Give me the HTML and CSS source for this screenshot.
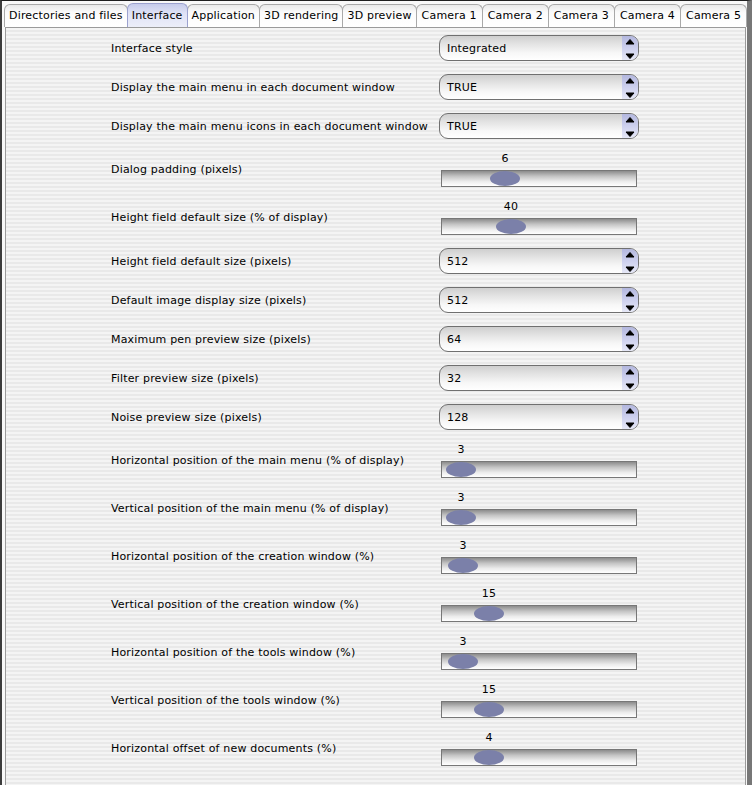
FILE: index.html
```html
<!DOCTYPE html>
<html>
<head>
<meta charset="utf-8">
<link rel="stylesheet" href="styles.css">
</head>
<body>
<div class="window">
  <div class="tabs">
    <div class="tab">Directories and files</div>
    <div class="tab active">Interface</div>
    <div class="tab">Application</div>
    <div class="tab">3D rendering</div>
    <div class="tab">3D preview</div>
    <div class="tab tab-wide">Camera 1</div>
    <div class="tab tab-wide">Camera 2</div>
    <div class="tab tab-wide">Camera 3</div>
    <div class="tab tab-wide">Camera 4</div>
    <div class="tab tab-wide">Camera 5</div>
  </div>
  <div class="panel">
    <div class="form">
      <div class="label">Interface style</div>
      <div class="menu"><span class="menu-text">Integrated</span><span class="arrows"><svg width="16" height="24" viewBox="0 0 16 24"><path d="M4 8 L8 3.5 L12 8 Z" fill="#000" stroke="#000" stroke-width="1" stroke-linejoin="round"/><path d="M4 18 L8 22.5 L12 18 Z" fill="#000" stroke="#000" stroke-width="1" stroke-linejoin="round"/></svg></span></div>

      <div class="label">Display the main menu in each document window</div>
      <div class="menu"><span class="menu-text">TRUE</span><span class="arrows"><svg width="16" height="24" viewBox="0 0 16 24"><path d="M4 8 L8 3.5 L12 8 Z" fill="#000" stroke="#000" stroke-width="1" stroke-linejoin="round"/><path d="M4 18 L8 22.5 L12 18 Z" fill="#000" stroke="#000" stroke-width="1" stroke-linejoin="round"/></svg></span></div>

      <div class="label">Display the main menu icons in each document window</div>
      <div class="menu"><span class="menu-text">TRUE</span><span class="arrows"><svg width="16" height="24" viewBox="0 0 16 24"><path d="M4 8 L8 3.5 L12 8 Z" fill="#000" stroke="#000" stroke-width="1" stroke-linejoin="round"/><path d="M4 18 L8 22.5 L12 18 Z" fill="#000" stroke="#000" stroke-width="1" stroke-linejoin="round"/></svg></span></div>

      <div class="label">Dialog padding (pixels)</div>
      <div class="slider" style="--pos:49px"><div class="value-row"><span class="value">6</span></div><div class="track"><span class="thumb"></span></div></div>

      <div class="label">Height field default size (% of display)</div>
      <div class="slider" style="--pos:55px"><div class="value-row"><span class="value">40</span></div><div class="track"><span class="thumb"></span></div></div>

      <div class="label">Height field default size (pixels)</div>
      <div class="menu"><span class="menu-text">512</span><span class="arrows"><svg width="16" height="24" viewBox="0 0 16 24"><path d="M4 8 L8 3.5 L12 8 Z" fill="#000" stroke="#000" stroke-width="1" stroke-linejoin="round"/><path d="M4 18 L8 22.5 L12 18 Z" fill="#000" stroke="#000" stroke-width="1" stroke-linejoin="round"/></svg></span></div>

      <div class="label">Default image display size (pixels)</div>
      <div class="menu"><span class="menu-text">512</span><span class="arrows"><svg width="16" height="24" viewBox="0 0 16 24"><path d="M4 8 L8 3.5 L12 8 Z" fill="#000" stroke="#000" stroke-width="1" stroke-linejoin="round"/><path d="M4 18 L8 22.5 L12 18 Z" fill="#000" stroke="#000" stroke-width="1" stroke-linejoin="round"/></svg></span></div>

      <div class="label">Maximum pen preview size (pixels)</div>
      <div class="menu"><span class="menu-text">64</span><span class="arrows"><svg width="16" height="24" viewBox="0 0 16 24"><path d="M4 8 L8 3.5 L12 8 Z" fill="#000" stroke="#000" stroke-width="1" stroke-linejoin="round"/><path d="M4 18 L8 22.5 L12 18 Z" fill="#000" stroke="#000" stroke-width="1" stroke-linejoin="round"/></svg></span></div>

      <div class="label">Filter preview size (pixels)</div>
      <div class="menu"><span class="menu-text">32</span><span class="arrows"><svg width="16" height="24" viewBox="0 0 16 24"><path d="M4 8 L8 3.5 L12 8 Z" fill="#000" stroke="#000" stroke-width="1" stroke-linejoin="round"/><path d="M4 18 L8 22.5 L12 18 Z" fill="#000" stroke="#000" stroke-width="1" stroke-linejoin="round"/></svg></span></div>

      <div class="label">Noise preview size (pixels)</div>
      <div class="menu"><span class="menu-text">128</span><span class="arrows"><svg width="16" height="24" viewBox="0 0 16 24"><path d="M4 8 L8 3.5 L12 8 Z" fill="#000" stroke="#000" stroke-width="1" stroke-linejoin="round"/><path d="M4 18 L8 22.5 L12 18 Z" fill="#000" stroke="#000" stroke-width="1" stroke-linejoin="round"/></svg></span></div>

      <div class="label">Horizontal position of the main menu (% of display)</div>
      <div class="slider" style="--pos:5px"><div class="value-row"><span class="value">3</span></div><div class="track"><span class="thumb"></span></div></div>

      <div class="label">Vertical position of the main menu (% of display)</div>
      <div class="slider" style="--pos:5px"><div class="value-row"><span class="value">3</span></div><div class="track"><span class="thumb"></span></div></div>

      <div class="label">Horizontal position of the creation window (%)</div>
      <div class="slider" style="--pos:7px"><div class="value-row"><span class="value">3</span></div><div class="track"><span class="thumb"></span></div></div>

      <div class="label">Vertical position of the creation window (%)</div>
      <div class="slider" style="--pos:33px"><div class="value-row"><span class="value">15</span></div><div class="track"><span class="thumb"></span></div></div>

      <div class="label">Horizontal position of the tools window (%)</div>
      <div class="slider" style="--pos:7px"><div class="value-row"><span class="value">3</span></div><div class="track"><span class="thumb"></span></div></div>

      <div class="label">Vertical position of the tools window (%)</div>
      <div class="slider" style="--pos:33px"><div class="value-row"><span class="value">15</span></div><div class="track"><span class="thumb"></span></div></div>

      <div class="label">Horizontal offset of new documents (%)</div>
      <div class="slider" style="--pos:33px"><div class="value-row"><span class="value">4</span></div><div class="track"><span class="thumb"></span></div></div>
    </div>
  </div>
</div>
</body>
</html>
```
FILE: styles.css
```css
html, body {
  margin: 0;
  padding: 0;
  height: 100%;
  overflow: hidden;
}

body {
  background: #f6f6f6;
  font-family: "DejaVu Sans", Verdana, sans-serif;
  font-size: 11px;
  letter-spacing: 0.18px;
  color: #000;
}

.window {
  box-sizing: border-box;
  width: 752px;
  height: 785px;
  border-top: 1px solid #1e1e1e;
  border-left: 2px solid #3c3c3c;
  border-right: 5px solid #777;
  padding: 0 1px 0 2px;
  display: flex;
  flex-direction: column;
  background: #f8f8f8;
}

.tabs {
  display: flex;
  align-items: flex-end;
  height: 26px;
}

.tab {
  box-sizing: border-box;
  height: 23px;
  line-height: 22px;
  padding: 0 4px;
  border: 1px solid #a9a9a9;
  border-bottom: none;
  border-radius: 6px 6px 0 0;
  background: linear-gradient(#e9e9e9, #fbfbfb 35%, #ffffff);
  white-space: nowrap;
  margin-right: -1px;
}

.tab-wide {
  padding: 0 5px;
}

.tab.active {
  height: 24px;
  line-height: 23px;
  border-color: #9ca2cf;
  background: linear-gradient(#c6cbeb, #dfe2f6 40%, #eceef9);
  position: relative;
  z-index: 1;
}

.panel {
  flex: 1;
  margin-left: 1px;
  border: 1px solid #9a9a9a;
  border-bottom: none;
  background: repeating-linear-gradient(to bottom, #f4f4f4 0 2px, #e9e9e9 2px 4px);
}

.form {
  display: grid;
  grid-template-columns: 328px 200px;
  row-gap: 13px;
  align-items: center;
  padding: 7px 0 0 105px;
}

.label {
  white-space: nowrap;
}

.menu {
  box-sizing: border-box;
  height: 26px;
  width: 200px;
  border: 1px solid #707070;
  border-radius: 9px;
  overflow: hidden;
  display: flex;
  background: linear-gradient(#cfcfcf, #e4e4e4 35%, #f7f7f7 70%, #ffffff);
}

.menu-text {
  flex: 1;
  padding: 1px 0 0 7px;
  line-height: 23px;
}

.arrows {
  width: 16px;
  display: flex;
  background: linear-gradient(#b3b7de, #cdd0ee 50%, #e6e8f7);
}

.arrows svg {
  display: block;
}

.slider {
  margin-left: 2px;
  width: 196px;
  display: flex;
  flex-direction: column;
  gap: 4px;
}

.value-row {
  position: relative;
  height: 14px;
}

.value {
  position: absolute;
  top: 0;
  left: var(--pos);
  width: 30px;
  text-align: center;
  line-height: 13px;
}

.track {
  position: relative;
  box-sizing: border-box;
  height: 17px;
  border: 1px solid #777;
  background: linear-gradient(#8c8c8c, #c4c4c4 35%, #ececec 70%, #ffffff);
}

.thumb {
  position: absolute;
  top: 0;
  left: calc(var(--pos) - 1px);
  width: 30px;
  height: 15px;
  border-radius: 50%;
  background: #7b80a9;
}
```
